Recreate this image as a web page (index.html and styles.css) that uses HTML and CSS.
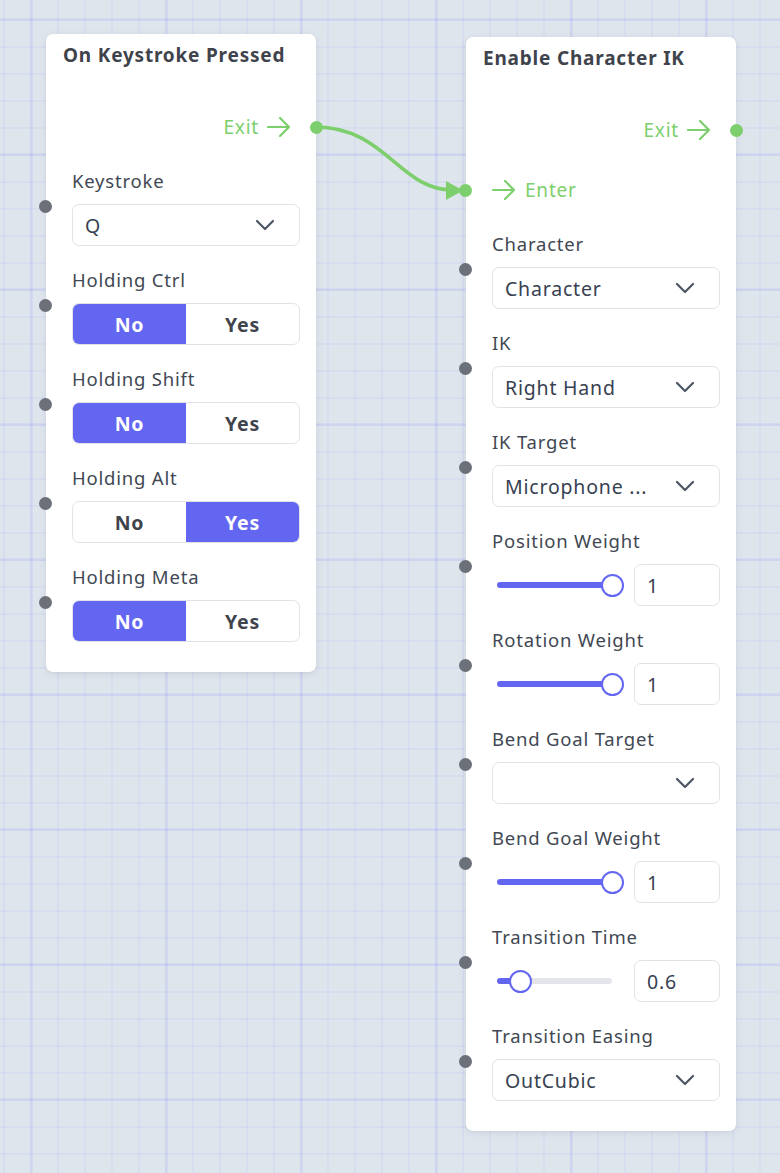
FILE: index.html
```html
<!DOCTYPE html>
<html lang="en">
<head>
<meta charset="utf-8">
<title>Node Graph</title>
<link rel="stylesheet" href="styles.css">
</head>
<body>
<div class="canvas">
  <svg class="wires" width="780" height="1173" viewBox="0 0 780 1173">
    <path d="M316 127 C 385 127, 400 190, 452 190" fill="none" stroke="#7ccf6c" stroke-width="3.5" stroke-linecap="round"/>
    <polygon points="446,181 463,190.5 446,200" fill="#7ccf6c"/>
  </svg>

  <section class="node node-a">
    <h2 class="node-title">On Keystroke Pressed</h2>
    <div class="ports">
      <div class="port port-out">
        <span>Exit</span>
        <svg class="arrow" width="24" height="22" viewBox="0 0 24 22"><path d="M1 11h21M13 2l9 9-9 9" fill="none" stroke="#7ccf6c" stroke-width="2.2" stroke-linecap="round" stroke-linejoin="round"/></svg>
        <i class="dot dot-flow dot-right"></i>
      </div>
    </div>
    <div class="fields">
      <div class="field">
        <i class="dot dot-in"></i>
        <div class="label">Keystroke</div>
        <div class="select"><span>Q</span><svg class="chev" width="20" height="12" viewBox="0 0 20 12"><path d="M2 2l8 8 8-8" fill="none" stroke="#4b5563" stroke-width="2.2" stroke-linecap="round" stroke-linejoin="round"/></svg></div>
      </div>
      <div class="field">
        <i class="dot dot-in"></i>
        <div class="label">Holding Ctrl</div>
        <div class="toggle"><span class="seg on">No</span><span class="seg">Yes</span></div>
      </div>
      <div class="field">
        <i class="dot dot-in"></i>
        <div class="label">Holding Shift</div>
        <div class="toggle"><span class="seg on">No</span><span class="seg">Yes</span></div>
      </div>
      <div class="field">
        <i class="dot dot-in"></i>
        <div class="label">Holding Alt</div>
        <div class="toggle"><span class="seg">No</span><span class="seg on">Yes</span></div>
      </div>
      <div class="field">
        <i class="dot dot-in"></i>
        <div class="label">Holding Meta</div>
        <div class="toggle"><span class="seg on">No</span><span class="seg">Yes</span></div>
      </div>
    </div>
  </section>

  <section class="node node-b">
    <h2 class="node-title">Enable Character IK</h2>
    <div class="ports">
      <div class="port port-out">
        <span>Exit</span>
        <svg class="arrow" width="24" height="22" viewBox="0 0 24 22"><path d="M1 11h21M13 2l9 9-9 9" fill="none" stroke="#7ccf6c" stroke-width="2.2" stroke-linecap="round" stroke-linejoin="round"/></svg>
        <i class="dot dot-flow dot-right"></i>
      </div>
      <div class="port port-in">
        <i class="dot dot-flow dot-left"></i>
        <svg class="arrow" width="24" height="22" viewBox="0 0 24 22"><path d="M1 11h21M13 2l9 9-9 9" fill="none" stroke="#7ccf6c" stroke-width="2.2" stroke-linecap="round" stroke-linejoin="round"/></svg>
        <span>Enter</span>
      </div>
    </div>
    <div class="fields">
      <div class="field">
        <i class="dot dot-in"></i>
        <div class="label">Character</div>
        <div class="select"><span>Character</span><svg class="chev" width="20" height="12" viewBox="0 0 20 12"><path d="M2 2l8 8 8-8" fill="none" stroke="#4b5563" stroke-width="2.2" stroke-linecap="round" stroke-linejoin="round"/></svg></div>
      </div>
      <div class="field">
        <i class="dot dot-in"></i>
        <div class="label">IK</div>
        <div class="select"><span>Right Hand</span><svg class="chev" width="20" height="12" viewBox="0 0 20 12"><path d="M2 2l8 8 8-8" fill="none" stroke="#4b5563" stroke-width="2.2" stroke-linecap="round" stroke-linejoin="round"/></svg></div>
      </div>
      <div class="field">
        <i class="dot dot-in"></i>
        <div class="label">IK Target</div>
        <div class="select"><span>Microphone ...</span><svg class="chev" width="20" height="12" viewBox="0 0 20 12"><path d="M2 2l8 8 8-8" fill="none" stroke="#4b5563" stroke-width="2.2" stroke-linecap="round" stroke-linejoin="round"/></svg></div>
      </div>
      <div class="field">
        <i class="dot dot-in"></i>
        <div class="label">Position Weight</div>
        <div class="slider-row">
          <div class="slider"><div class="track"><div class="fill" style="width:100%"></div></div><span class="knob" style="left:100%"></span></div>
          <div class="num">1</div>
        </div>
      </div>
      <div class="field">
        <i class="dot dot-in"></i>
        <div class="label">Rotation Weight</div>
        <div class="slider-row">
          <div class="slider"><div class="track"><div class="fill" style="width:100%"></div></div><span class="knob" style="left:100%"></span></div>
          <div class="num">1</div>
        </div>
      </div>
      <div class="field">
        <i class="dot dot-in"></i>
        <div class="label">Bend Goal Target</div>
        <div class="select"><span></span><svg class="chev" width="20" height="12" viewBox="0 0 20 12"><path d="M2 2l8 8 8-8" fill="none" stroke="#4b5563" stroke-width="2.2" stroke-linecap="round" stroke-linejoin="round"/></svg></div>
      </div>
      <div class="field">
        <i class="dot dot-in"></i>
        <div class="label">Bend Goal Weight</div>
        <div class="slider-row">
          <div class="slider"><div class="track"><div class="fill" style="width:100%"></div></div><span class="knob" style="left:100%"></span></div>
          <div class="num">1</div>
        </div>
      </div>
      <div class="field">
        <i class="dot dot-in"></i>
        <div class="label">Transition Time</div>
        <div class="slider-row">
          <div class="slider"><div class="track"><div class="fill" style="width:20%"></div></div><span class="knob" style="left:20%"></span></div>
          <div class="num">0.6</div>
        </div>
      </div>
      <div class="field">
        <i class="dot dot-in"></i>
        <div class="label">Transition Easing</div>
        <div class="select"><span>OutCubic</span><svg class="chev" width="20" height="12" viewBox="0 0 20 12"><path d="M2 2l8 8 8-8" fill="none" stroke="#4b5563" stroke-width="2.2" stroke-linecap="round" stroke-linejoin="round"/></svg></div>
      </div>
    </div>
  </section>
</div>
</body>
</html>
```

FILE: styles.css
```css
* { box-sizing: border-box; }
html, body { margin: 0; padding: 0; }
body {
  font-family: "Noto Sans", "Open Sans", sans-serif;
  color: #414853;
  letter-spacing: 0.8px;
}
.canvas {
  position: relative;
  width: 780px;
  height: 1173px;
  overflow: hidden;
  background-color: #dfe5ed;
  background-image:
    linear-gradient(to right, rgba(110, 115, 245, 0.09) 3px, transparent 3px),
    linear-gradient(to bottom, rgba(110, 115, 245, 0.09) 3px, transparent 3px),
    linear-gradient(to right, rgba(110, 115, 245, 0.065) 2px, transparent 2px),
    linear-gradient(to bottom, rgba(110, 115, 245, 0.065) 2px, transparent 2px);
  background-size: 135px 135px, 135px 135px, 27px 27px, 27px 27px;
  background-position: 30px 18px, 30px 18px, 3px 19px, 3px 19px;
}
.wires {
  position: absolute;
  left: 0;
  top: 0;
}
.node {
  position: absolute;
  width: 270px;
  background: #fff;
  border-radius: 7px;
  box-shadow: 0 2px 8px rgba(30, 40, 60, 0.08), 0 1px 2px rgba(30, 40, 60, 0.05);
}
.node-a { left: 46px; top: 34px; }
.node-b { left: 466px; top: 37px; }
.node-title {
  margin: 0;
  padding: 9px 17px 0;
  font-size: 19px;
  line-height: 25px;
  font-weight: 700;
  color: #3f434c;
}
.ports {
  display: flex;
  flex-direction: column;
  gap: 30px;
  margin-top: 44px;
  margin-bottom: 26px;
}
.port {
  position: relative;
  display: flex;
  align-items: center;
  height: 30px;
  gap: 8px;
  color: #7ccf6c;
  font-size: 19px;
}
.port-out { justify-content: flex-end; padding-right: 25px; }
.port-in { padding-left: 26px; gap: 9px; }
.arrow { display: block; }
.dot {
  position: absolute;
  width: 13px;
  height: 13px;
  border-radius: 50%;
  display: block;
}
.dot-flow { background: #7ccf6c; top: 8.5px; }
.dot-right { right: -7px; }
.dot-left { left: -7px; }
.fields {
  display: flex;
  flex-direction: column;
  gap: 21px;
  padding: 0 16px 30px 26px;
}
.field { position: relative; }
.dot-in {
  background: #6b7079;
  left: -33px;
  top: 31.5px;
}
.label {
  font-size: 18.5px;
  line-height: 25px;
  margin-bottom: 11px;
  color: #414853;
}
.select {
  display: flex;
  align-items: center;
  justify-content: space-between;
  height: 42px;
  border: 1px solid #e1e3e8;
  border-radius: 7px;
  padding: 0 24px 0 12px;
  font-size: 19.5px;
  color: #374151;
}
.chev { display: block; }
.toggle {
  display: flex;
  height: 42px;
  border: 1px solid #e1e3e8;
  border-radius: 7px;
  overflow: hidden;
}
.seg {
  flex: 1;
  display: flex;
  align-items: center;
  justify-content: center;
  font-size: 19.5px;
  font-weight: 700;
  color: #3f434c;
}
.seg.on {
  background: #6366f1;
  color: #fff;
}
.slider-row {
  display: flex;
  align-items: center;
  gap: 11px;
  height: 42px;
}
.slider {
  position: relative;
  flex: 1;
  height: 24px;
  margin: 0 11px 0 5px;
  display: flex;
  align-items: center;
}
.track {
  width: 100%;
  height: 6px;
  border-radius: 3px;
  background: #e3e5ea;
  overflow: hidden;
}
.fill {
  height: 100%;
  background: #6366f1;
}
.knob {
  position: absolute;
  top: 1px;
  width: 23px;
  height: 23px;
  margin-left: -11.5px;
  border-radius: 50%;
  border: 2.5px solid #6366f1;
  background: #fff;
}
.num {
  width: 86px;
  height: 42px;
  border: 1px solid #e1e3e8;
  border-radius: 7px;
  display: flex;
  align-items: center;
  padding-left: 12px;
  font-size: 19.5px;
  color: #374151;
}
```
